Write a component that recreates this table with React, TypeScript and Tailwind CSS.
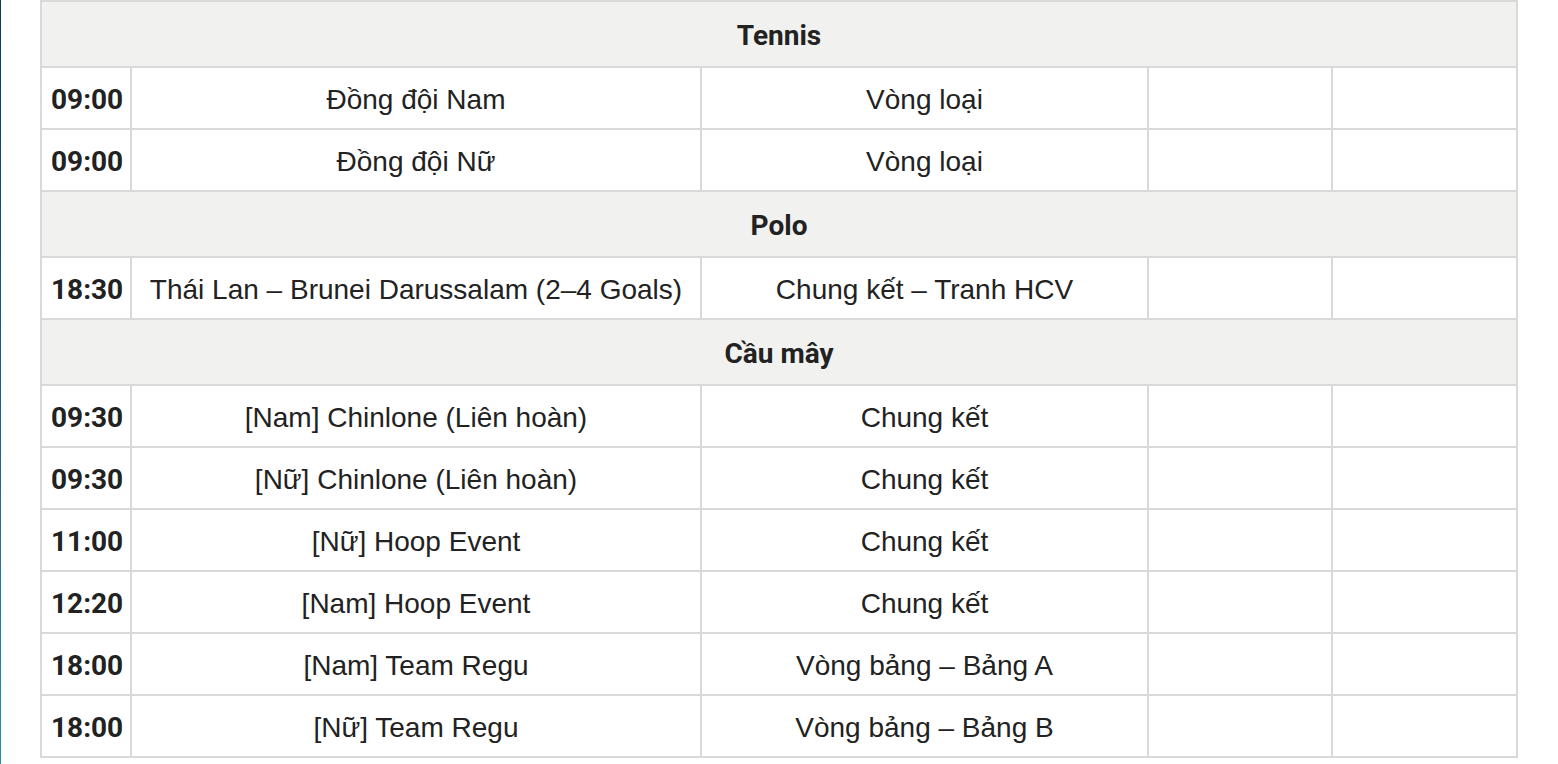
type Row = { time: string; event: string; stage: string };

type Section = { sport: string; rows: Row[] };

const SCHEDULE: Section[] = [
  {
    sport: "Tennis",
    rows: [
      { time: "09:00", event: "Đồng đội Nam", stage: "Vòng loại" },
      { time: "09:00", event: "Đồng đội Nữ", stage: "Vòng loại" },
    ],
  },
  {
    sport: "Polo",
    rows: [
      {
        time: "18:30",
        event: "Thái Lan – Brunei Darussalam (2–4 Goals)",
        stage: "Chung kết – Tranh HCV",
      },
    ],
  },
  {
    sport: "Cầu mây",
    rows: [
      { time: "09:30", event: "[Nam] Chinlone (Liên hoàn)", stage: "Chung kết" },
      { time: "09:30", event: "[Nữ] Chinlone (Liên hoàn)", stage: "Chung kết" },
      { time: "11:00", event: "[Nữ] Hoop Event", stage: "Chung kết" },
      { time: "12:20", event: "[Nam] Hoop Event", stage: "Chung kết" },
      { time: "18:00", event: "[Nam] Team Regu", stage: "Vòng bảng – Bảng A" },
      { time: "18:00", event: "[Nữ] Team Regu", stage: "Vòng bảng – Bảng B" },
    ],
  },
];

const cell = "border-2 border-[#d9d9d9] h-[62px] px-0 pt-[4px] pb-0 align-middle";

export default function App() {
  return (
    <div className="flex h-[764px] w-[1558px] overflow-hidden bg-white text-[#222]">
      <div className="w-px h-full bg-gradient-to-b from-[#0c3a55] via-[#1a6378] to-[#2a8f9e]" />
      <div className="ml-[39px]">
        <table className="table-fixed border-collapse w-[1478px] text-[28px] font-['Liberation_Sans',Arial,sans-serif]">
          <colgroup>
            <col className="w-[90px]" />
            <col className="w-[570px]" />
            <col className="w-[447px]" />
            <col className="w-[184px]" />
            <col className="w-[185px]" />
          </colgroup>
          <tbody>
            {SCHEDULE.map((section) => (
              <SectionRows key={section.sport} section={section} />
            ))}
          </tbody>
        </table>
      </div>
    </div>
  );
}

function SectionRows({ section }: { section: Section }) {
  return (
    <>
      <tr>
        <th
          colSpan={5}
          className="border-2 border-[#d9d9d9] h-[66px] px-0 pt-[3px] pb-0 bg-[#f1f1f0] text-center font-bold font-['Roboto',sans-serif]"
        >
          {section.sport}
        </th>
      </tr>
      {section.rows.map((row, i) => (
        <tr key={i}>
          <td className={`${cell} pl-[9px] font-bold font-['Roboto',sans-serif]`}>
            {row.time}
          </td>
          <td className={`${cell} text-center`}>{row.event}</td>
          <td className={`${cell} text-center`}>{row.stage}</td>
          <td className={cell} />
          <td className={cell} />
        </tr>
      ))}
    </>
  );
}
